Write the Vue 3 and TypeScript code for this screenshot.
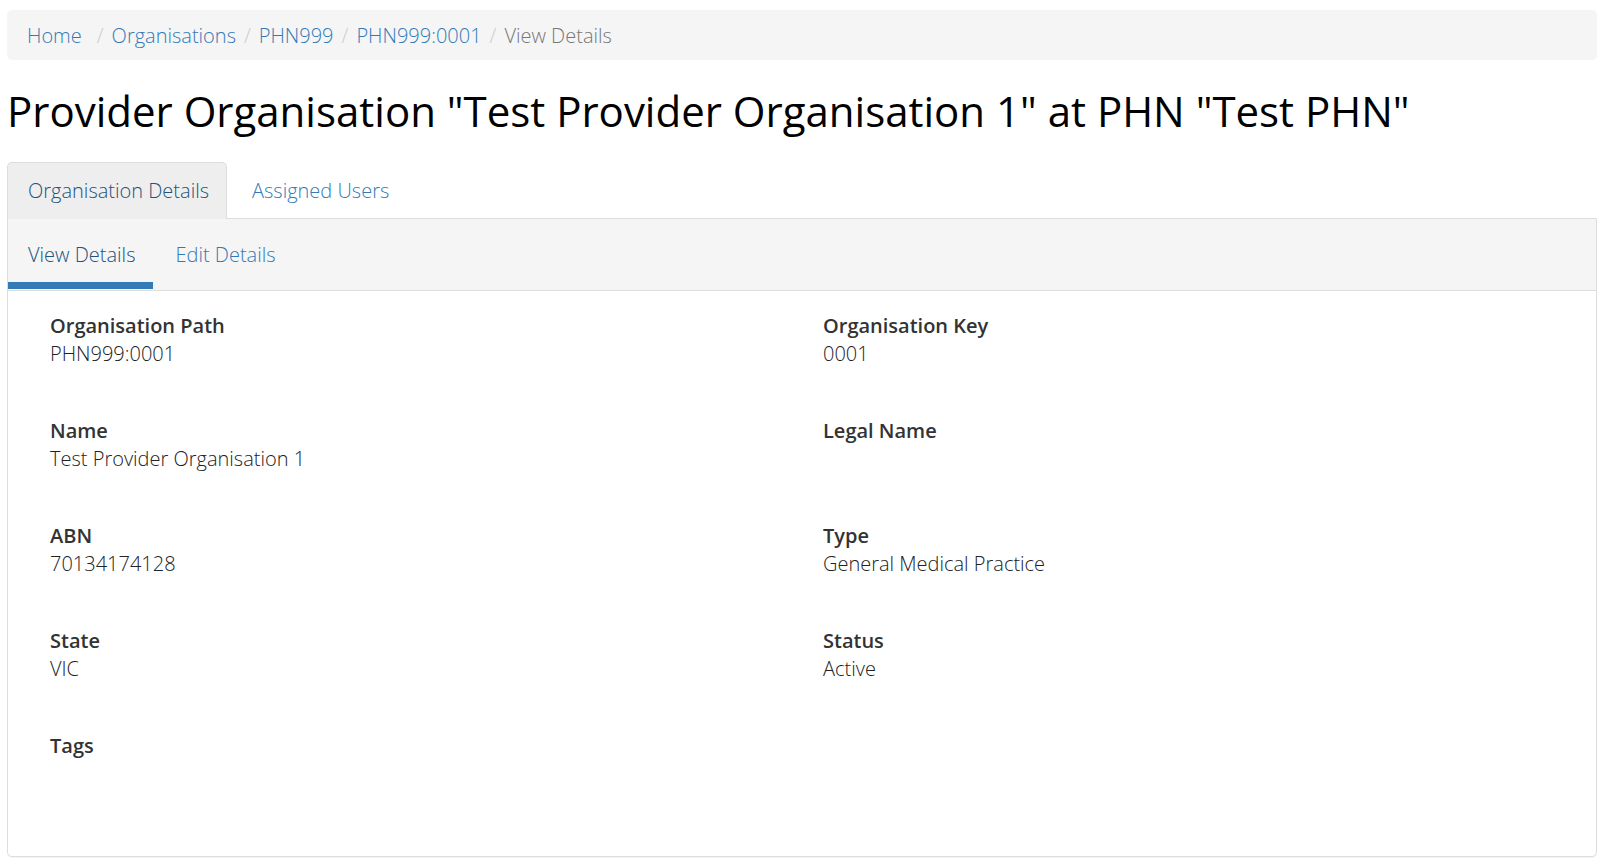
<script setup lang="ts">
interface Crumb { label: string; href?: string }
interface Field { label: string; value: string }
const crumbs: Crumb[] = [
  { label: 'Home', href: '#home' },
  { label: 'Organisations', href: '#organisations' },
  { label: 'PHN999', href: '#phn999' },
  { label: 'PHN999:0001', href: '#phn999-0001' },
  { label: 'View Details' },
]
const fields: Field[] = [
  { label: 'Organisation Path', value: 'PHN999:0001' },
  { label: 'Organisation Key', value: '0001' },
  { label: 'Name', value: 'Test Provider Organisation 1' },
  { label: 'Legal Name', value: '' },
  { label: 'ABN', value: '70134174128' },
  { label: 'Type', value: 'General Medical Practice' },
  { label: 'State', value: 'VIC' },
  { label: 'Status', value: 'Active' },
  { label: 'Tags', value: '' },
]
</script>

<template>
  <main class="page">
    <nav aria-label="Breadcrumb">
      <ol class="breadcrumb">
        <li v-for="c in crumbs" :key="c.label">
          <a v-if="c.href" :href="c.href">{{ c.label }}</a>
          <span v-else aria-current="page">{{ c.label }}</span>
        </li>
      </ol>
    </nav>
    <h1>Provider Organisation "Test Provider Organisation 1" at PHN "Test PHN"</h1>
    <nav class="tabs" aria-label="Organisation">
      <a class="tab active" href="#details">Organisation Details</a>
      <a class="tab" href="#users">Assigned Users</a>
    </nav>
    <section class="panel">
      <nav class="subtabs" aria-label="Details">
        <a class="subtab active" href="#view">View Details</a>
        <a class="subtab" href="#edit">Edit Details</a>
      </nav>
      <dl class="fields">
        <div v-for="f in fields" :key="f.label" class="field">
          <dt>{{ f.label }}</dt>
          <dd>{{ f.value }}</dd>
        </div>
      </dl>
    </section>
  </main>
</template>

<style>
body { background: #fff; }
</style>

<style scoped>
.page {
  padding: 10px 9px 8px 7px;
  font-family: "Open Sans", "Noto Sans", sans-serif;
  font-size: 20px;
  font-weight: 300;
  line-height: 28px;
  color: #333;
}
a { color: #337ab7; text-decoration: none; }
.breadcrumb {
  display: flex;
  margin: 0;
  padding: 12px 20px 10px;
  list-style: none;
  background: #f5f5f5;
  border-radius: 5px;
  color: #777;
}
.breadcrumb li:first-child { margin-right: 7px; }
.breadcrumb li + li::before { content: "/"; padding: 0 8px; color: #ccc; }
h1 {
  margin: 23px 0;
  font-size: 42px;
  font-weight: 400;
  line-height: 56px;
  color: #000;
}
.tabs { position: relative; display: flex; gap: 4px; margin-bottom: -1px; }
.tab {
  padding: 14px 17px 14px 20px;
  border: 1px solid transparent;
  border-bottom: 0;
  border-radius: 5px 5px 0 0;
}
.tab.active { background: #eee; border-color: #ddd; color: #23527c; }
.panel {
  border: 1px solid #ddd;
  border-radius: 0 0 5px 5px;
  box-shadow: 0 1px 1px rgba(0, 0, 0, 0.05);
}
.subtabs {
  display: flex;
  padding-bottom: 1px;
  background: #f5f5f5;
  border-bottom: 1px solid #ddd;
}
.subtab { padding: 22px 18px 13px 20px; border-bottom: 7px solid transparent; }
.subtab + .subtab { padding-left: 22px; }
.subtab.active { border-color: #337ab7; color: #23527c; }
.fields {
  display: grid;
  grid-template-columns: 1fr 1fr;
  margin: 0;
  padding: 21px 0 19px 42px;
}
.field { min-height: 105px; }
dt { font-weight: 600; }
dd { margin: 0; color: #222; }
</style>
